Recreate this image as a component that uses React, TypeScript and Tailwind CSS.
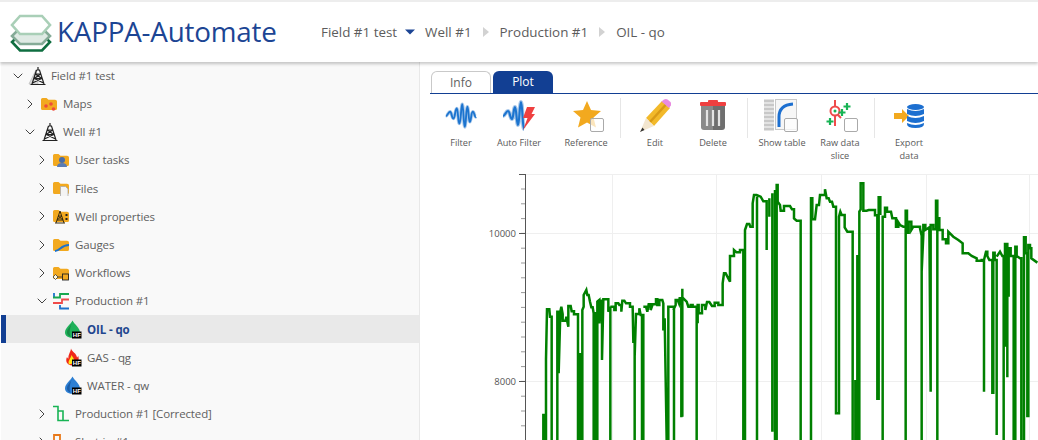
import React from "react";
import { ChevronDown, ChevronRight } from "lucide-react";

const FOLDER = "#f2a91f";

function Folder({ children }: { children?: React.ReactNode }) {
  return (
    <svg width="18" height="16" viewBox="0 0 18 16" className="block">
      <path d="M1 3.5 Q1 2 2.5 2 H6.5 L8.5 3.8 H15 Q17 3.8 17 5.5 V12.5 Q17 14 15.5 14 H2.5 Q1 14 1 12.5 Z" fill={FOLDER} />
      {children}
    </svg>
  );
}

function Derrick({ ghost }: { ghost?: boolean }) {
  return (
    <svg width="20" height="20" viewBox="0 0 20 20" className="block">
      {ghost && <path d="M9 4 L2 18 H11 Z" fill="#e0e0e0" stroke="#c4c4c4" strokeWidth="1" />}
      <path d="M11 1 V4 M9.500 4 H12.500 L17 18 M9.500 4 L5 18 M3.500 18.500 H18.500 M8.500 8 H13.500 M7.300 12.500 H14.700 M8.500 8 L14.700 12.500 M13.500 8 L7.300 12.500 M5.500 17 L14.700 12.500 M16.500 17 L7.300 12.500" stroke="#222" strokeWidth="1.200" fill="none" />
    </svg>
  );
}

function Drop({ color, dark, flame }: { color: string; dark: string; flame?: boolean }) {
  return (
    <svg width="18" height="19" viewBox="0 0 18 19" className="block">
      {flame ? (
        <>
          <path d="M7 0.500 C8 4 12.500 5 13 9.500 C14 9 14 8 14 7.500 C15.500 10.500 15 17 8.500 17.500 C3 17.500 1 13 3 9 C3.500 10 4 10.500 4.500 10.500 C4 6.500 6.500 4.500 7 0.500 Z" fill="#f0281a" />
          <path d="M7.500 7 C9 10 11 11 10 15 L5 16.500 C3.500 13 6.500 11 7.500 7 Z" fill="#ffe81a" />
        </>
      ) : (
        <>
          <path d="M8.500 0.500 C10.500 4.500 16 8 16 12.500 C16 16 12.500 17.800 8.500 17.800 C4.500 17.800 1 16 1 12.500 C1 8 6.500 4.500 8.500 0.500 Z" fill={color} />
          <path d="M8 3 C6 7 3 9 3 12.500 C3 14.500 4.500 16 6.500 16.500 C5 13.500 5.500 8.500 8 3 Z" fill={dark} />
        </>
      )}
      <rect x="8" y="11.500" width="9.500" height="7" fill="#000" />
      <text x="12.800" y="17" textAnchor="middle" fontSize="6" fontWeight="700" fill="#fff" fontFamily="Liberation Sans, sans-serif">HF</text>
    </svg>
  );
}

const ICONS: Record<string, React.ReactNode> = {
  field: <Derrick ghost />,
  well: <Derrick />,
  maps: (
    <Folder>
      <circle cx="6" cy="10" r="1.800" fill="#ef4b3c" />
      <circle cx="11" cy="8" r="1.800" fill="#ef4b3c" />
      <circle cx="13.500" cy="13" r="1.800" fill="#ef4b3c" />
    </Folder>
  ),
  tasks: (
    <Folder>
      <circle cx="10" cy="8" r="3" fill="#4a6da8" />
      <path d="M5 15 Q5 11 10 11 Q15 11 15 15 Z" fill="#5a7cb5" />
    </Folder>
  ),
  files: (
    <Folder>
      <path d="M8.500 6.500 H13.500 L16 9 V17 H8.500 Z" fill="#f4f4f4" stroke="#aaa" strokeWidth="0.800" />
    </Folder>
  ),
  props: (
    <Folder>
      <path d="M8 3 L4 15 M8 3 L12 15 M3 15 H13 M6 8 H10 M5 12 H11 M6 8 L11 12 M10 8 L5 12" stroke="#3a2d10" strokeWidth="1" fill="none" />
      <rect x="13.500" y="6" width="2" height="2" fill="#222" />
      <rect x="13.500" y="10" width="2" height="2" fill="#222" />
    </Folder>
  ),
  gauges: (
    <Folder>
      <path d="M3 14 C8 14 9 8 17 8" stroke="#1d72cc" strokeWidth="2" fill="none" />
    </Folder>
  ),
  workflows: (
    <Folder>
      <path d="M1 12 L3.500 9.500 L6 12 L3.500 14.500 Z" fill="#fff8e0" stroke="#333" strokeWidth="0.800" />
      <path d="M6 12 H10" stroke="#333" strokeWidth="0.800" />
      <rect x="10.500" y="9" width="6" height="6" fill="#f2a91f" stroke="#222" strokeWidth="0.900" />
    </Folder>
  ),
  production: (
    <svg width="18" height="18" viewBox="0 0 18 18" className="block">
      <path d="M2 1 V5 M8 13 V16.500 H17" stroke="#1d72cc" strokeWidth="1.800" fill="none" />
      <path d="M1 5.500 H8 V2 H17" stroke="#18a84f" strokeWidth="1.800" fill="none" />
      <path d="M1 11 H10 V7.500 H17" stroke="#ef4b4b" strokeWidth="1.800" fill="none" />
    </svg>
  ),
  oil: <Drop color="#1fb15a" dark="#168a45" />,
  gas: <Drop color="#f0281a" dark="#f0281a" flame />,
  water: <Drop color="#2d7fd3" dark="#1c5ea8" />,
  corrected: (
    <svg width="18" height="18" viewBox="0 0 18 18" className="block">
      <path d="M1 1.500 H6 V15.500 H17" stroke="#18b455" strokeWidth="1.600" fill="none" />
      <path d="M6 6 H11 V15" stroke="#18b455" strokeWidth="1.600" fill="none" />
    </svg>
  ),
  shut: (
    <svg width="18" height="18" viewBox="0 0 18 18" className="block">
      <path d="M2 16 V2 H8 V16" stroke="#e8791a" strokeWidth="1.800" fill="none" />
    </svg>
  ),
};

type RowData = { label: string; icon: string; pl: string; open?: boolean; leaf?: boolean; sel?: boolean };

const ROWS: RowData[] = [
  { label: "Field #1 test", icon: "field", pl: "pl-[9px]", open: true },
  { label: "Maps", icon: "maps", pl: "pl-[21px]" },
  { label: "Well #1", icon: "well", pl: "pl-[21px]", open: true },
  { label: "User tasks", icon: "tasks", pl: "pl-[33px]" },
  { label: "Files", icon: "files", pl: "pl-[33px]" },
  { label: "Well properties", icon: "props", pl: "pl-[33px]" },
  { label: "Gauges", icon: "gauges", pl: "pl-[33px]" },
  { label: "Workflows", icon: "workflows", pl: "pl-[33px]" },
  { label: "Production #1", icon: "production", pl: "pl-[33px]", open: true },
  { label: "OIL - qo", icon: "oil", pl: "pl-[45px]", leaf: true, sel: true },
  { label: "GAS - qg", icon: "gas", pl: "pl-[45px]", leaf: true },
  { label: "WATER - qw", icon: "water", pl: "pl-[45px]", leaf: true },
  { label: "Production #1 [Corrected]", icon: "corrected", pl: "pl-[33px]" },
  { label: "Shut-in #1", icon: "shut", pl: "pl-[33px]" },
];

function Row({ r }: { r: RowData }) {
  return (
    <div className={`flex h-[28.2px] shrink-0 items-center ${r.pl} ${r.sel ? "bg-[#e9e9e9] shadow-[inset_5px_0_0_#123f93]" : ""}`}>
      <span className="flex w-[16px] justify-center text-[#444]">
        {r.leaf ? null : r.open ? <ChevronDown size={18} strokeWidth={1.5} /> : <ChevronRight size={18} strokeWidth={1.5} />}
      </span>
      <span className="flex w-[22px] justify-center">{ICONS[r.icon]}</span>
      <span className={`ml-[3px] whitespace-nowrap text-[11.5px] tracking-[-0.12px] ${r.sel ? "font-bold text-[#1f468f]" : "text-[#5f5f5f]"}`}>{r.label}</span>
    </div>
  );
}

function Checkbox({ className }: { className: string }) {
  return <span className={`absolute h-[14px] w-[14px] rounded-[2px] border border-[#aaa] bg-white/70 ${className}`} />;
}

const WAVE = "M1 17 C3 17 4 12 6 12 C8 12 8 20 10 20 C12 20 12 8 14 8 C15.500 8 15.500 26 17 26 C19 26 19 3 20.500 3 C22 3 22 30 23.500 30 C25 30 25 6 26.500 6 C28 6 28 24 29.500 24 C31 24 31 12 33 12 C35 12 35 19 37 18";

function ToolIcon({ name }: { name: string }) {
  if (name === "filter")
    return (
      <svg width="32" height="34" viewBox="0 0 38 34">
        <path d={WAVE} fill="none" stroke="#a8c8ea" strokeWidth="4" />
        <path d={WAVE} fill="none" stroke="#1c74cf" strokeWidth="2.200" />
      </svg>
    );
  if (name === "auto")
    return (
      <svg width="32" height="34" viewBox="0 0 32 34">
        <path d="M0 17 C2 17 3 12 5 12 C7 12 7 20 9 20 C10.500 20 10.500 8 12 8 C13.500 8 13.500 26 15 26 C16.500 26 16.500 3 18 3 C19.500 3 19.500 30 21 30" fill="none" stroke="#a8c8ea" strokeWidth="4" />
        <path d="M0 17 C2 17 3 12 5 12 C7 12 7 20 9 20 C10.500 20 10.500 8 12 8 C13.500 8 13.500 26 15 26 C16.500 26 16.500 3 18 3 C19.500 3 19.500 30 21 30" fill="none" stroke="#1c74cf" strokeWidth="2.200" />
        <path d="M24 8 H32 L28.500 15 H32 L20 31 L24.500 19 H20 Z" fill="#ef4040" />
      </svg>
    );
  if (name === "star")
    return (
      <span className="relative block h-[34px] w-[34px]">
        <svg width="30" height="30" viewBox="0 0 30 30" className="ml-[3px] block">
          <path d="M15 2 L19 11 L29 12 L21.500 18.500 L24 28.500 L15 23.500 L6 28.500 L8.500 18.500 L1 12 L11 11 Z" fill="#f2a91f" />
        </svg>
        <Checkbox className="left-[21px] top-[19px]" />
      </span>
    );
  if (name === "pencil")
    return (
      <svg width="32" height="34" viewBox="0 0 32 34">
        <path d="M7 19 L23 2 L31 9 L15 27 Z" fill="#f2b92a" />
        <path d="M11 23 L27 5.500" stroke="#d99a16" strokeWidth="2.500" />
        <path d="M22.500 2.500 L25 0.500 Q27 -0.500 28.500 0.500 L31.500 3 Q33 5 31.500 7 L30 9 Z" fill="#e98be0" />
        <path d="M7 19 L15 27 L1 33 Z" fill="#f3e6cf" />
        <path d="M3.500 28.500 L5.500 31 L1 33 Z" fill="#333" />
      </svg>
    );
  if (name === "trash")
    return (
      <svg width="28" height="34" viewBox="0 0 28 34">
        <rect x="9" y="1" width="10" height="3" rx="1" fill="#ef4040" />
        <rect x="1" y="3" width="26" height="4" rx="1" fill="#ef4040" />
        <path d="M2 7 H14 V31 H5 Q2 31 2 28 Z" fill="#8a8a8a" />
        <path d="M14 7 H26 V28 Q26 31 23 31 H14 Z" fill="#6f6f6f" />
        <path d="M8 11 V27 M14 11 V27 M20 11 V27" stroke="#e4e4e4" strokeWidth="2.200" />
      </svg>
    );
  if (name === "table")
    return (
      <span className="relative block h-[34px] w-[36px]">
        <svg width="34" height="32" viewBox="0 0 34 32" className="block">
          <path d="M0 2 H10 M0 6 H10 M0 10 H10 M0 14 H10 M0 18 H10 M0 22 H10 M0 26 H10 M0 30 H10" stroke="#c8c8c8" strokeWidth="3" />
          <rect x="11.500" y="0.500" width="21" height="30" fill="#f6f6f6" stroke="#c8c8c8" />
          <path d="M15 28 V18 Q15 6 29 5" fill="none" stroke="#1c6fd0" strokeWidth="3" />
        </svg>
        <Checkbox className="left-[20px] top-[19px]" />
      </span>
    );
  if (name === "slice")
    return (
      <span className="relative block h-[34px] w-[36px]">
        <svg width="36" height="30" viewBox="0 0 36 30" className="block">
          <path d="M13 1 V27" stroke="#ef4b4b" strokeWidth="2" />
          <circle cx="13" cy="12" r="4.500" fill="#fff" stroke="#ef4b4b" strokeWidth="2" />
          <circle cx="13" cy="12" r="1.500" fill="#18b455" />
          <path d="M16 16 L19 19" stroke="#ef4b4b" strokeWidth="2" />
          <path d="M25 4 V11 M21.500 7.500 H28.500 M20 10 V17 M16.500 13.500 H23.500 M8 19 V26 M4.500 22.500 H11.500" stroke="#18b455" strokeWidth="2.200" />
        </svg>
        <Checkbox className="left-[22px] top-[19px]" />
      </span>
    );
  return (
    <svg width="30" height="26" viewBox="0 0 30 26">
      <path d="M0 10 H8 V6 L15 13 L8 20 V16 H0 Z" fill="#f2a91f" />
      <ellipse cx="21.500" cy="4" rx="8.500" ry="3" fill="#1c6fd0" />
      <path d="M13 6 Q21.500 10 30 6 V11 Q21.500 15 13 11 Z" fill="#1c6fd0" />
      <path d="M13 13 Q21.500 17 30 13 V18 Q21.500 22 13 18 Z" fill="#1c6fd0" />
      <path d="M13 20 Q21.500 24 30 20 V21 Q30 25 21.500 25 Q13 25 13 21 Z" fill="#1c6fd0" />
    </svg>
  );
}

function Tool({ name, label, w }: { name: string; label: React.ReactNode; w: string }) {
  return (
    <div className={`flex shrink-0 flex-col items-center ${w}`}>
      <div className="flex h-[40px] items-center justify-center">
        <ToolIcon name={name} />
      </div>
      <div className="mt-[0px] whitespace-nowrap text-center text-[9.2px] leading-[13px] text-[#5a5a5a]">{label}</div>
    </div>
  );
}

function Sep({ className }: { className: string }) {
  return <div className={`h-[40px] w-px shrink-0 bg-[#e6e6e6] ${className}`} />;
}

const LEFT =
  "M130 810 V735 H135 V810 M138 810 V568 L141 418 H148 L150 440 H155 V810 M172 810 V425 H176 V610 L181 425 L184 410 L188 432 V452 H197 L199 440 L205 470 V408 H212 L215 424 H222 V433 H234 V810 M238 810 V553 H243 V810 M247 810 V420 L251 410 V375 L259 360 L262 375 H266 L270 395 L274 412 H278 L281 430 V810 M281 430 H287 V810 M292 810 V395 L298 390 V460 L302 392 H306 V570 L310 388 H325 V425 L331 410 V810 M331 410 H343 V420 H347 V400 H355 L358 405 H364 V425 L367 392 H373 L378 400 H390 V410 H398 L400 515 L404 515 V810 M404 560 L408 432 H418 V415 L422 435 H430 V810 M426 810 V435 M430 410 H438 L442 425 L446 403 H452 V420 L458 403 H468 V388 H472 V405 H478 V390 H487 L490 400 V478 H494 V445 L500 810 M505 810 V410 H522 V810 M520 420 L527 405 V390 H533 L537 400 L539 385 H544 V742 M547 740 V356 V382 L553 388 L560 395 L565 410 H572 V405 H578 V410 H590 V810 M593 460 V405 H596 V430 H606 V405 H616 V420 L621 396 H628 L636 408 H644 V398 H655 V405 H668 V340 L672 310 H677 L690 335 V258 H702 V240 L710 247 H720 V240 H730 V810 M735 810 V180 L741 162 H748 L751 170 H758 V100 L762 75 H770 L782 80 L790 94 H800 V240 M771 810 V80";

const RIGHT =
  "M-2 85 V140 M7 785 V70 M15 810 V60 M20 810 V45 H23 V95 L30 105 L32 122 H42 V108 H60 L66 118 H72 V145 L80 152 H92 V810 M123 810 V85 H127 V148 H135 L140 105 H147 L150 75 H165 V58 L170 85 H176 L180 95 H186 L190 110 H198 V730 H207 V140 L211 125 L215 135 H224 V172 L232 185 H248 V810 M256 810 V630 M262 810 V255 M268 810 V125 L272 118 V40 H280 V122 H290 L296 120 H315 V136 H322 V690 M326 690 V82 H331 V135 M338 810 V140 H345 V113 H351 V125 H363 L367 145 H378 V170 H385 V157 L390 165 L400 170 H407 V810 M407 810 V122 H411 V188 H416 V155 H424 V180 L430 170 H450 V175 L455 197 V810 M455 305 L460 195 V165 H466 V180 L478 172 L482 665 V165 H490 V178 H498 V92 H502 V810 M502 145 H508 V180 H518 V208 H528 V220 H535 V185 L550 200 L565 210 L578 220 V250 H595 L605 258 L620 265 V272 H635 V270 H642 V665 M642 270 L648 245 H652 V258 L658 270 H667 V672 M670 672 V248 H674 V270 H680 V795 M680 260 L690 245 L697 258 H701 V810 M705 530 V222 H712 V622 M716 380 V235 H722 V258 H731 V810 M736 810 V230 H740 V258 L750 265 H754 V810 M762 810 V202 H767 V250 H772 V742 M775 742 V225 H780 V235 H784 V265 L802 278";

function Chart() {
  const minorTicks = Array.from({ length: 18 }, (_, i) => 189 + i * 14.8);
  return (
    <svg width="618" height="266" viewBox="420 174 618 266" className="block">
      {[612.5, 716.5, 821.5, 926.5, 1029.5].map((x) => (
        <path key={x} d={`M${x} 174 V440`} stroke="#efefef" strokeWidth="1" />
      ))}
      {[174.5, 233.5, 381.5].map((y) => (
        <path key={y} d={`M526 ${y} H1038`} stroke="#efefef" strokeWidth="1" />
      ))}
      <path d="M525.500 174 V440" stroke="#555" strokeWidth="1" />
      {minorTicks.map((y) => (
        <path key={y} d={`M521 ${y} H525`} stroke="#999" strokeWidth="1" />
      ))}
      <path d="M519 174.500 H525 M519 233.500 H525 M519 381.500 H525" stroke="#555" strokeWidth="1" />
      <text x="516" y="236.500" textAnchor="end" fontSize="9.500" fill="#555" fontFamily="Open Sans, sans-serif">10000</text>
      <text x="516" y="384.500" textAnchor="end" fontSize="9.500" fill="#555" fontFamily="Open Sans, sans-serif">8000</text>
      <g transform="translate(500 170) scale(0.33333)">
        <path d={LEFT} fill="none" stroke="#008000" strokeWidth="7.500" strokeLinejoin="miter" />
      </g>
      <g transform="translate(770 170) scale(0.33333)">
        <path d={RIGHT} fill="none" stroke="#008000" strokeWidth="7.500" strokeLinejoin="miter" />
      </g>
    </svg>
  );
}

export default function App() {
  return (
    <div className="flex h-[440px] w-[1038px] flex-col overflow-hidden bg-white font-['Open_Sans',sans-serif]">
      <header className="relative z-10 flex h-[62px] shrink-0 items-center border-t-2 border-[#ededed] bg-white shadow-[0_2px_3px_rgba(0,0,0,0.22)]">
        <svg width="42" height="38" viewBox="0 0 42 38" className="ml-[10px] mt-[2px] shrink-0">
          <path d="M10 20 H32 L40 28 L32 36.500 H10 L2 28 Z" fill="#fff" stroke="#0f6e40" strokeWidth="2.600" />
          <path d="M10 14 H32 L40 22 L32 30 H10 L2 22 Z" fill="#dfeae4" stroke="#85ab97" strokeWidth="2.600" />
          <path d="M10 2 H32 L40 11 L32 20 H10 L2 11 Z" fill="#fff" stroke="#a9cfb7" strokeWidth="2.600" />
        </svg>
        <div className="ml-[5px] w-[264px] shrink-0 whitespace-nowrap text-[27.8px] font-medium leading-none tracking-[-0.2px] text-[#1c4594]">KAPPA-Automate</div>
        <nav className="flex items-center whitespace-nowrap text-[13.4px] text-[#5c5c5c]">
          <span>Field #1 test</span>
          <svg width="10" height="6" viewBox="0 0 10 6" className="ml-[8px] mr-[10px]"><path d="M0 0.500 H10 L5 5.500 Z" fill="#1c4594" /></svg>
          <span>Well #1</span>
          <svg width="6" height="10" viewBox="0 0 6 10" className="ml-[11px] mr-[11px]"><path d="M0 0 L6 5 L0 10 Z" fill="#d2d2d2" /></svg>
          <span>Production #1</span>
          <svg width="6" height="10" viewBox="0 0 6 10" className="ml-[11px] mr-[11px]"><path d="M0 0 L6 5 L0 10 Z" fill="#d2d2d2" /></svg>
          <span>OIL - qo</span>
        </nav>
      </header>
      <div className="flex min-h-0 flex-1">
        <aside className="-mt-[0.6px] ml-px flex w-[419px] shrink-0 flex-col overflow-hidden border-r border-[#e8e8e8] bg-[#f9f9f9]">
          {ROWS.map((r) => (
            <Row key={r.label} r={r} />
          ))}
        </aside>
        <main className="flex min-w-0 flex-1 flex-col">
          <div className="ml-[10px] mt-[9px] flex h-[23px] shrink-0 items-end gap-[2px] border-b border-[#123f93] pl-px">
            <div className="flex h-[22px] w-[60px] items-center justify-center rounded-t-[6px] border border-b-0 border-[#c9c9c9] text-[12px] text-[#5f5f5f]">Info</div>
            <div className="flex h-[22px] w-[60px] items-center justify-center rounded-t-[6px] bg-[#123f93] text-[12px] text-white">Plot</div>
          </div>
          <div className="flex h-[80px] shrink-0 items-start pl-[12px] pt-[2px]">
            <Tool name="filter" label="Filter" w="w-[58px]" />
            <Tool name="auto" label="Auto Filter" w="w-[58px]" />
            <Tool name="star" label="Reference" w="ml-[2px] w-[72px]" />
            <Sep className="-ml-[2px] mt-[2px]" />
            <Tool name="pencil" label="Edit" w="w-[68px]" />
            <Tool name="trash" label="Delete" w="w-[48px]" />
            <Sep className="ml-[10px] mt-[2px]" />
            <Tool name="table" label="Show table" w="w-[68px]" />
            <Tool name="slice" label={<>Raw data<br />slice</>} w="w-[48px]" />
            <Sep className="ml-[10px] mt-[2px]" />
            <Tool name="db" label={<>Export<br />data</>} w="w-[68px]" />
          </div>
          <Chart />
        </main>
      </div>
    </div>
  );
}
